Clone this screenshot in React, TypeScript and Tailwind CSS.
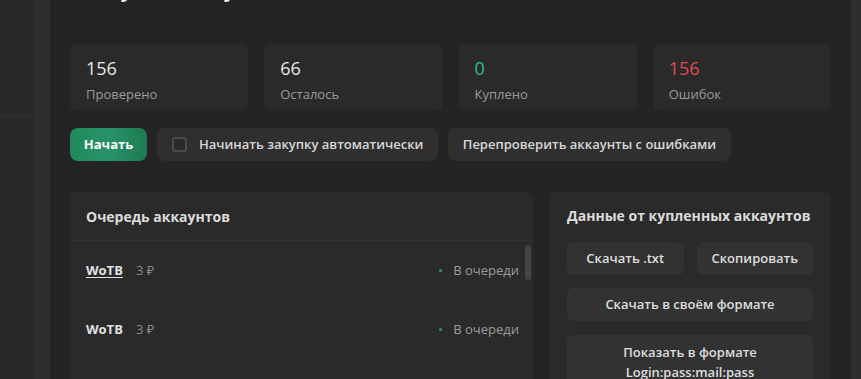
import React from "react";

const font = { fontFamily: '"Open Sans", "Noto Sans", sans-serif' };

function Stat({ value, label, color }: { value: string; label: string; color: string }) {
  return (
    <div className="bg-[#2a2a2a] rounded-md px-4 pt-[12px] pb-[7px] flex flex-col">
      <div className={`text-[18px] leading-[24px] ${color}`}>{value}</div>
      <div className="mt-[4px] text-[13px] leading-[20px] text-[#9a9a9a]">{label}</div>
    </div>
  );
}

function Row({ underline }: { underline?: boolean }) {
  return (
    <div className="h-[59px] flex items-center pl-4 pr-[14px]">
      <span className={`text-[13px] font-bold text-[#e2e2e2] ${underline ? "underline underline-offset-2" : ""}`}>WoTB</span>
      <span className="ml-[13px] text-[13px] text-[#8a8a8a]">3 ₽</span>
      <div className="flex-1" />
      <span className="w-[3px] h-[3px] rounded-full bg-[#23a066]" />
      <span className="ml-[11px] text-[13px] text-[#9b9b9b]">В очереди</span>
    </div>
  );
}

function Btn({ children, className = "" }: { children: React.ReactNode; className?: string }) {
  return (
    <button className={`bg-[#323232] rounded-md text-[13px] font-semibold text-[#dedede] ${className}`}>{children}</button>
  );
}

export default function App() {
  return (
    <div style={font} className="w-[861px] h-[379px] overflow-hidden flex bg-[#242424]">
      <div className="w-[34px] bg-[#292929] flex flex-col">
        <div className="h-[117px] border-b border-[#333333]" />
      </div>
      <div className="w-[16px] bg-[#2e2e2e]" />
      <div className="flex-1 px-5 overflow-hidden">
        <h1 className="-mt-[24px] h-[28px] text-[20px] leading-[28px] font-bold text-[#f0f0f0] pl-[11px] whitespace-nowrap">
          Покупка аккаунтов
        </h1>
        <div className="mt-[40px] grid grid-cols-4 gap-4 h-[67px]">
          <Stat value="156" label="Проверено" color="text-[#e8e8e8]" />
          <Stat value="66" label="Осталось" color="text-[#e8e8e8]" />
          <Stat value="0" label="Куплено" color="text-[#25c27e]" />
          <Stat value="156" label="Ошибок" color="text-[#e5484d]" />
        </div>
        <div className="mt-[17px] flex gap-[10px] h-[33px]">
          <button className="w-[77px] rounded-lg bg-gradient-to-r from-[#22885b] via-[#27936a] to-[#1d7b52] text-white text-[13px] font-bold">
            Начать
          </button>
          <div className="w-[281px] bg-[#2f2f2f] rounded-lg flex items-center pl-[15px]">
            <span className="w-[15px] h-[15px] rounded-[3px] border-2 border-[#4a4a4a] bg-[#2a2a2a]" />
            <span className="ml-[12px] text-[13px] font-semibold text-[#d8d8d8]">Начинать закупку автоматически</span>
          </div>
          <div className="w-[283px] bg-[#2f2f2f] rounded-lg flex items-center justify-center">
            <span className="text-[13px] font-semibold text-[#d8d8d8]">Перепроверить аккаунты с ошибками</span>
          </div>
        </div>
        <div className="mt-[31px] grid grid-cols-[463px_1fr] gap-4 h-[220px]">
          <div className="bg-[#2a2a2a] rounded-t-md flex flex-col">
            <div className="h-[49px] flex items-center pl-4 border-b border-[#343434] text-[14px] font-bold text-[#dcdcdc]">
              Очередь аккаунтов
            </div>
            <div className="relative flex-1">
              <Row underline />
              <Row />
              <div className="absolute right-[2px] top-[4px] w-[6px] h-[35px] rounded-full bg-[#444444]" />
            </div>
          </div>
          <div className="bg-[#2a2a2a] rounded-t-md px-[18px] pt-[14px] flex flex-col">
            <div className="text-[14px] leading-[20px] font-bold text-[#dcdcdc]">Данные от купленных аккаунтов</div>
            <div className="mt-[16px] grid grid-cols-2 gap-[13px]">
              <Btn className="h-[33px]">Скачать .txt</Btn>
              <Btn className="h-[33px]">Скопировать</Btn>
            </div>
            <Btn className="mt-[13px] h-[33px]">Скачать в своём формате</Btn>
            <Btn className="mt-[14px] h-[62px] leading-[20px] py-[7px] flex flex-col items-center justify-start">
              <span>Показать в формате</span>
              <span>Login:pass:mail:pass</span>
            </Btn>
          </div>
        </div>
      </div>
      <div className="w-[10px] bg-[#2e2e2e]" />
    </div>
  );
}
